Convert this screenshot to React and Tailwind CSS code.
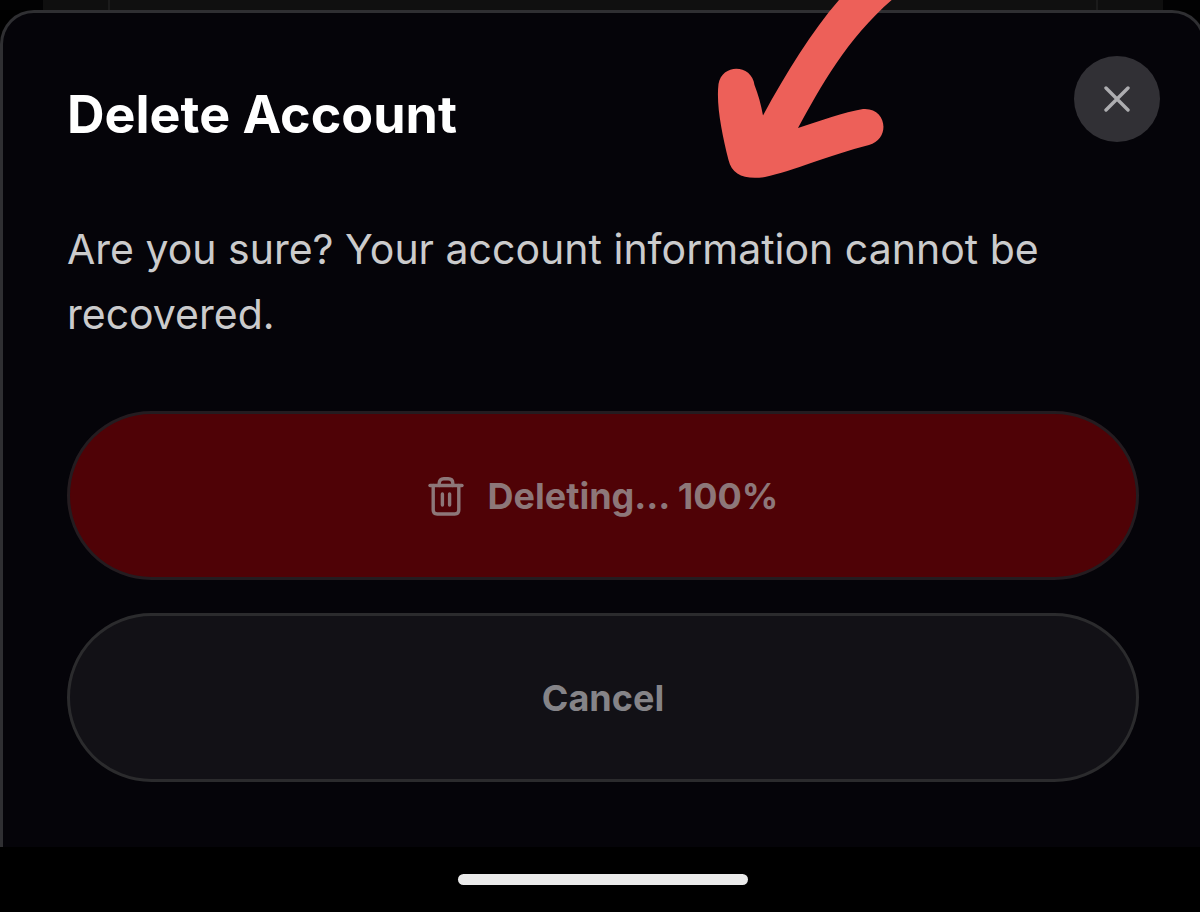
function CloseIcon() {
  return (
    <svg viewBox="0 0 26 26" className="size-[26px]" fill="none" stroke="currentColor" strokeWidth="3.4" strokeLinecap="round" aria-hidden="true">
      <path d="M2 2L24 24M24 2L2 24" />
    </svg>
  );
}

function TrashIcon() {
  return (
    <svg viewBox="0 0 36 42" className="h-[42px] w-9 shrink-0" fill="none" stroke="currentColor" strokeWidth="3.4" strokeLinecap="round" strokeLinejoin="round" aria-hidden="true">
      <path d="M2 10.5H34" />
      <path d="M11.2 10.5V8.300Q11.200 3.700 15.800 3.700H20.200Q24.800 3.700 24.800 8.300V10.500" />
      <path d="M5.200 10.500V35Q5.200 39 9.200 39H26.800Q30.800 39 30.800 35V10.500" />
      <path d="M14.400 19V30M21.600 19V30" />
    </svg>
  );
}

function PointerArrow() {
  return (
    <svg viewBox="0 0 180 180" className="pointer-events-none absolute left-[716px] top-0 size-[180px] text-[#ed6059]" fill="currentColor" aria-hidden="true">
      <path d="M123 0C96 31 70 73 47 115.500C45 104 42 94 38.500 85C36 64 6 63 2.500 84C0 105 6 134 12.500 160C16 175 29 180 49 177C77 171 113 155 153 145C175 139 171 107 147 109C128 112 104 121 82 128C105 86 132 37 178 -2Z" />
    </svg>
  );
}

export default function App() {
  return (
    <div className="relative min-h-screen overflow-hidden bg-black font-['Inter',sans-serif]">
      <div className="flex min-h-screen w-[calc(100%+6px)] flex-col">
        <div className="flex h-[10px] bg-[#020203] px-[43px]" aria-hidden="true">
          <div className="w-[67px] border-r-2 border-[#1b1b1b] bg-[#0f0f0f]" />
          <div className="grow bg-[#101010]" />
          <div className="w-[67px] border-l-2 border-[#1b1b1b] bg-[#0f0f0f]" />
        </div>

        <section role="dialog" aria-labelledby="title" aria-describedby="message" className="flex grow flex-col rounded-t-[34px] border-x-3 border-t-3 border-[#2f2f32] bg-[#050409] px-16 pt-[43px] pb-[65px]">
          <header className="-mr-[21px] flex items-start justify-between">
            <h1 id="title" className="pt-[26px] text-[52px] leading-[66px] font-bold text-white">Delete Account</h1>
            <button type="button" aria-label="Close" className="flex size-[86px] items-center justify-center rounded-full bg-[#313035] text-[#adadb0]">
              <CloseIcon />
            </button>
          </header>

          <p id="message" className="mt-[69px] text-[41px] leading-[65px] text-[#cbcbcc]">
            Are you sure? Your account information cannot be recovered.
          </p>

          <div className="mt-[64px] flex flex-col gap-[33px] text-[36px] font-bold">
            <button type="button" className="flex h-[169px] items-center justify-center gap-6 rounded-full border-3 border-[#241c20] bg-[#4f0206] text-[#8d7779]">
              <TrashIcon />
              Deleting... 100%
            </button>
            <button type="button" className="h-[169px] rounded-full border-3 border-[#2b2b2d] bg-[#121116] text-[#858488]">
              Cancel
            </button>
          </div>
        </section>

        <footer className="flex h-[65px] items-center justify-center bg-black">
          <div className="h-[11px] w-[290px] rounded-full bg-[#ebebeb]" />
        </footer>
      </div>
      <PointerArrow />
    </div>
  );
}
